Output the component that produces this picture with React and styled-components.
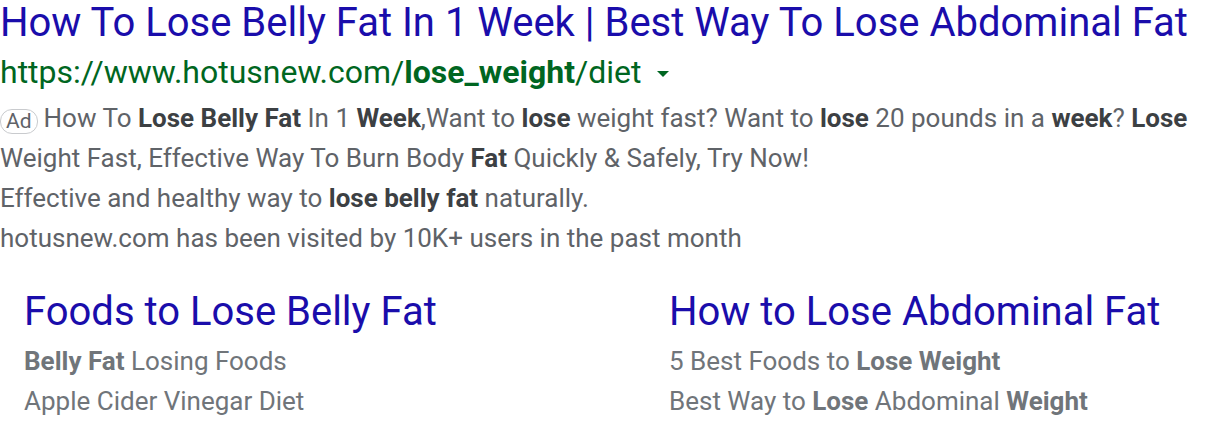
import React from 'react';
import styled, { createGlobalStyle } from 'styled-components';

const GlobalStyle = createGlobalStyle`
  body {
    margin: 0;
    background: #fff;
    font-family: Roboto, "Liberation Sans", Arial, sans-serif;
  }
`;

const Result = styled.div`
  width: 1216px;
  height: 430px;
  overflow: hidden;
  box-sizing: border-box;
`;

const Title = styled.a`
  display: block;
  color: #1a0dab;
  font-size: 40px;
  line-height: 46px;
  text-decoration: none;
  white-space: nowrap;
`;

const UrlLine = styled.div`
  display: flex;
  align-items: center;
  margin-top: 4px;
  color: #006621;
  font-size: 32px;
  line-height: 44px;

  b {
    font-weight: 700;
  }
`;

const Caret = styled.span`
  display: inline-block;
  margin-left: 15px;
  margin-top: 4px;
  width: 0;
  height: 0;
  border-left: 6px solid transparent;
  border-right: 6px solid transparent;
  border-top: 6px solid #006621;
`;

const Snippet = styled.div`
  margin-top: 4px;
`;

const Desc = styled.div`
  color: #5f6368;
  font-size: 26px;
  line-height: 40px;

  b {
    color: #3c4043;
    font-weight: 700;
  }
`;

const AdBadge = styled.span`
  display: inline-block;
  box-sizing: border-box;
  height: 25px;
  line-height: 23px;
  padding: 0 5px;
  margin-right: 6px;
  border: 1px solid #c9cbce;
  border-radius: 12px;
  font-size: 21px;
  color: #5f6368;
  vertical-align: -1px;
`;

const Sitelinks = styled.div`
  display: grid;
  grid-template-columns: 645px 1fr;
  padding: 31px 0 0 24px;
`;

const Sitelink = styled.div`
  display: flex;
  flex-direction: column;
`;

const SitelinkTitle = styled.a`
  color: #1a0dab;
  font-size: 40px;
  line-height: 46px;
  text-decoration: none;
  margin-bottom: 6px;
  white-space: nowrap;
`;

const SitelinkDesc = styled.div`
  color: #70757a;
  font-size: 26px;
  line-height: 40px;
  white-space: nowrap;

  b {
    font-weight: 700;
  }
`;

const sitelinks = [
  {
    title: 'Foods to Lose Belly Fat',
    lines: [
      <><b>Belly Fat</b> Losing Foods</>,
      <>Apple Cider Vinegar Diet</>,
    ],
  },
  {
    title: 'How to Lose Abdominal Fat',
    lines: [
      <>5 Best Foods to <b>Lose Weight</b></>,
      <>Best Way to <b>Lose</b> Abdominal <b>Weight</b></>,
    ],
  },
];

export default function App() {
  return (
    <Result>
      <GlobalStyle />
      <Title href="#">How To Lose Belly Fat In 1 Week | Best Way To Lose Abdominal Fat</Title>
      <UrlLine>
        <span>
          https://www.hotusnew.com/<b>lose_weight</b>/diet
        </span>
        <Caret />
      </UrlLine>
      <Snippet>
        <Desc>
          <AdBadge>Ad</AdBadge>How To <b>Lose Belly Fat</b> In 1 <b>Week</b>,Want to <b>lose</b> weight fast?
          Want to <b>lose</b> 20 pounds in a <b>week</b>? <b>Lose</b> Weight Fast, Effective Way To Burn Body{' '}
          <b>Fat</b> Quickly &amp; Safely, Try Now!
        </Desc>
        <Desc>
          Effective and healthy way to <b>lose belly fat</b> naturally.
        </Desc>
        <Desc>hotusnew.com has been visited by 10K+ users in the past month</Desc>
      </Snippet>
      <Sitelinks>
        {sitelinks.map((s) => (
          <Sitelink key={s.title}>
            <SitelinkTitle href="#">{s.title}</SitelinkTitle>
            {s.lines.map((l, i) => (
              <SitelinkDesc key={i}>{l}</SitelinkDesc>
            ))}
          </Sitelink>
        ))}
      </Sitelinks>
    </Result>
  );
}
